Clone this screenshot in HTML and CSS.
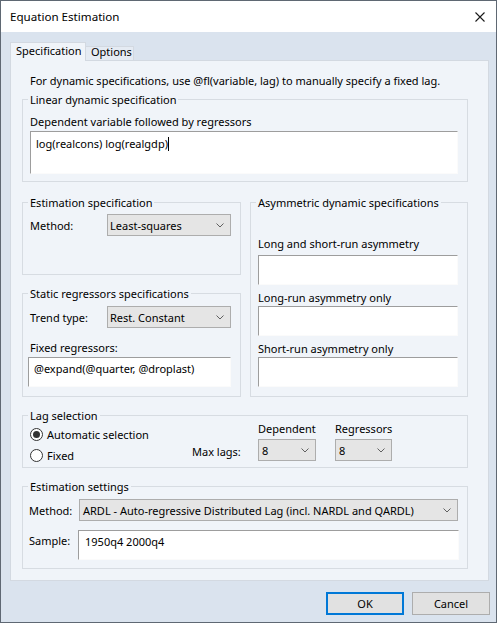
FILE: index.html
```html
<!DOCTYPE html>
<html>
<head>
<meta charset="utf-8">
<title>Equation Estimation</title>
<link rel="stylesheet" href="styles.css">
</head>
<body>
<div class="window">
  <div class="titlebar">
    <span class="title">Equation Estimation</span>
    <span class="close"><svg width="10" height="10" viewBox="0 0 10 10"><path d="M0.5 0.5L9.5 9.5M9.5 0.5L0.5 9.5" stroke="#1a1a1a" stroke-width="1.1" fill="none"/></svg></span>
  </div>
  <div class="client">
    <div class="tabs">
      <div class="tab active">Specification</div>
      <div class="tab inactive">Options</div>
    </div>
    <div class="panel">
      <div class="intro">For dynamic specifications, use @fl(variable, lag) to manually specify a fixed lag.</div>

      <div class="group g-linear">
        <div class="legend">Linear dynamic specification</div>
        <div class="l-dep">Dependent variable followed by regressors</div>
        <div class="edit area">log(realcons) log(realgdp)<span class="caret"></span></div>
      </div>

      <div class="cols">
        <div class="col">
          <div class="group g-est">
            <div class="legend">Estimation specification</div>
            <div class="row r-est">
              <span class="lbl lbl-m">Method:</span>
              <div class="select s-est"><span>Least-squares</span><svg class="chev" width="8" height="5" viewBox="0 0 8 5"><path d="M0.5 0.5L4 4L7.5 0.5" stroke="#606060" fill="none"/></svg></div>
            </div>
          </div>
          <div class="group g-static">
            <div class="legend">Static regressors specifications</div>
            <div class="row r-trend">
              <span class="lbl lbl-m">Trend type:</span>
              <div class="select s-est"><span>Rest. Constant</span><svg class="chev" width="8" height="5" viewBox="0 0 8 5"><path d="M0.5 0.5L4 4L7.5 0.5" stroke="#606060" fill="none"/></svg></div>
            </div>
            <div class="l-fixed">Fixed regressors:</div>
            <div class="edit e-fixed">@expand(@quarter, @droplast)</div>
          </div>
        </div>
        <div class="col">
          <div class="group g-asym">
            <div class="legend">Asymmetric dynamic specifications</div>
            <div class="l-asym1">Long and short-run asymmetry</div>
            <div class="edit e-asym e-asym1"></div>
            <div class="l-asym">Long-run asymmetry only</div>
            <div class="edit e-asym"></div>
            <div class="l-asym">Short-run asymmetry only</div>
            <div class="edit e-asym"></div>
          </div>
        </div>
      </div>

      <div class="group g-lag">
        <div class="legend">Lag selection</div>
        <div class="lagrow">
          <div class="radios">
            <div class="radio-row"><span class="radio on"><span class="dot"></span></span>Automatic selection</div>
            <div class="radio-row"><span class="radio"></span>Fixed</div>
          </div>
          <div class="maxlags">Max lags:</div>
          <div class="lagcol lag-dep">
            <div>Dependent</div>
            <div class="select s-lag"><span>8</span><svg class="chev" width="8" height="5" viewBox="0 0 8 5"><path d="M0.5 0.5L4 4L7.5 0.5" stroke="#606060" fill="none"/></svg></div>
          </div>
          <div class="lagcol lag-reg">
            <div>Regressors</div>
            <div class="select s-lag"><span>8</span><svg class="chev" width="8" height="5" viewBox="0 0 8 5"><path d="M0.5 0.5L4 4L7.5 0.5" stroke="#606060" fill="none"/></svg></div>
          </div>
        </div>
      </div>

      <div class="group g-settings">
        <div class="legend">Estimation settings</div>
        <div class="row r-method">
          <span class="lbl lbl-s">Method:</span>
          <div class="select s-method"><span>ARDL - Auto-regressive Distributed Lag (incl. NARDL and QARDL)</span><svg class="chev" width="8" height="5" viewBox="0 0 8 5"><path d="M0.5 0.5L4 4L7.5 0.5" stroke="#606060" fill="none"/></svg></div>
        </div>
        <div class="row r-sample">
          <span class="lbl lbl-s lbl-sample">Sample:</span>
          <div class="edit e-sample">1950q4 2000q4</div>
        </div>
      </div>
    </div>
    <div class="buttons">
      <div class="btn default">OK</div>
      <div class="btn">Cancel</div>
    </div>
  </div>
</div>
</body>
</html>
```

FILE: styles.css
```css
html, body {
  margin: 0;
  padding: 0;
}
body {
  font-family: "Noto Sans", "Open Sans", sans-serif;
  font-size: 11px;
  line-height: 15px;
  color: #000;
  background: #ffffff;
}
.window {
  width: 497px;
  height: 623px;
  box-sizing: border-box;
  border: 1px solid #5f6873;
  display: flex;
  flex-direction: column;
  background: #dae3ee;
}
.titlebar {
  height: 31px;
  flex: none;
  background: #ffffff;
  display: flex;
  align-items: center;
  padding-left: 9px;
}
.title {
  font-size: 11.6px;
  color: #000;
}
.close {
  margin-left: auto;
  margin-right: 11px;
  width: 10px;
  height: 10px;
  display: flex;
}
.client {
  flex: 1;
  padding: 10px 0 0 9px;
}
.tabs {
  display: flex;
  align-items: flex-end;
  height: 18px;
}
.tab {
  box-sizing: border-box;
  border: 1px solid #d3d9e1;
  border-bottom: none;
  white-space: nowrap;
}
.tab.active {
  width: 76px;
  height: 19px;
  margin-bottom: -1px;
  padding-left: 5px;
  background: #f0f4f9;
  position: relative;
  z-index: 1;
}
.tab.inactive {
  width: 48px;
  height: 14px;
  line-height: 9px;
  padding-left: 5px;
  border-left: none;
  background: #e5ebf3;
}
.panel {
  width: 479px;
  height: 521px;
  box-sizing: border-box;
  border: 1px solid #d3d9e1;
  background: #f0f4f9;
  padding: 12px 0 0 11px;
}
.intro {
  padding-left: 8px;
  white-space: nowrap;
}
.group {
  box-sizing: border-box;
  border: 1px solid #d7dce2;
  padding: 0 7px;
}
.legend {
  width: max-content;
  height: 15px;
  margin: -8px 0 0 -2px;
  padding: 0 2px;
  background: #f0f4f9;
  white-space: nowrap;
}
.edit {
  box-sizing: border-box;
  background: #ffffff;
  border-top: 1px solid #9d9d9d;
  border-left: 1px solid #9d9d9d;
  border-right: 1px solid #fbfbfb;
  border-bottom: 1px solid #fbfbfb;
  padding: 3px 5px 0 5px;
  white-space: nowrap;
}
.select {
  box-sizing: border-box;
  height: 22px;
  border: 1px solid #adadad;
  background: #e5e5e5;
  display: flex;
  align-items: center;
  padding: 0 6px 0 2px;
  white-space: nowrap;
}
.chev {
  margin-left: auto;
  flex: none;
}
.row {
  display: flex;
  align-items: center;
}
.lbl {
  flex: none;
  white-space: nowrap;
}

/* linear */
.g-linear {
  width: 446px;
  height: 83px;
  margin-top: 11px;
}
.l-dep {
  margin-top: 7px;
}
.area {
  margin-top: 2px;
  width: 428px;
  height: 43px;
  padding-top: 4px;
}
.caret {
  display: inline-block;
  width: 1px;
  height: 14px;
  background: #000;
  vertical-align: -3px;
}

/* columns */
.cols {
  display: grid;
  grid-template-columns: 219px 218px;
  column-gap: 9px;
  width: 446px;
  height: 195px;
  margin-top: 20px;
}
.col {
  display: flex;
  flex-direction: column;
}
.g-est {
  height: 73px;
}
.r-est {
  margin-top: 4px;
}
.lbl-m {
  width: 77px;
}
.s-est {
  width: 124px;
}
.g-static {
  height: 104px;
  margin-top: 18px;
}
.r-trend {
  margin-top: 5px;
}
.l-fixed {
  margin-top: 12px;
}
.e-fixed {
  margin-top: 2px;
  margin-left: -2px;
  width: 203px;
  height: 30px;
}
.g-asym {
  height: 195px;
}
.l-asym1 {
  margin-top: 26px;
}
.e-asym {
  width: 200px;
  height: 30px;
  margin-top: 1px;
}
.e-asym1 {
  margin-top: 4px;
}
.l-asym {
  margin-top: 5px;
}

/* lag */
.g-lag {
  width: 446px;
  height: 53px;
  margin-top: 18px;
}
.lagrow {
  display: flex;
  align-items: flex-start;
}
.radios {
  width: 162px;
  flex: none;
  margin-top: 1px;
}
.radio-row {
  height: 21px;
  display: flex;
  align-items: center;
  white-space: nowrap;
}
.radio {
  box-sizing: border-box;
  width: 13px;
  height: 13px;
  border: 1px solid #333333;
  border-radius: 50%;
  background: #ffffff;
  margin-right: 4px;
  display: flex;
  align-items: center;
  justify-content: center;
  flex: none;
}
.dot {
  width: 7px;
  height: 7px;
  border-radius: 50%;
  background: #333333;
}
.maxlags {
  width: 66px;
  flex: none;
  margin-top: 21px;
  white-space: nowrap;
}
.lagcol {
  display: flex;
  flex-direction: column;
  margin-top: -2px;
  flex: none;
}
.lagcol .select {
  margin-top: 3px;
}
.lag-dep {
  width: 58px;
}
.lag-reg {
  width: 57px;
  margin-left: 19px;
}
.s-lag {
  width: 100%;
  padding-left: 3px;
}

/* settings */
.g-settings {
  width: 446px;
  height: 83px;
  margin-top: 18px;
}
.r-method {
  margin-top: 5px;
}
.lbl-s {
  width: 49px;
  margin-left: -1px;
}
.r-method .lbl-s {
  width: 50px;
}
.s-method {
  width: 379px;
  padding-left: 3px;
}
.r-sample {
  margin-top: 9px;
  align-items: flex-start;
}
.lbl-sample {
  margin-top: 3px;
}
.e-sample {
  width: 381px;
  height: 30px;
  padding-left: 6px;
}

/* buttons */
.buttons {
  display: flex;
  justify-content: flex-end;
  gap: 8px;
  margin-top: 11px;
  padding-right: 6px;
}
.btn {
  box-sizing: border-box;
  width: 78px;
  height: 23px;
  border: 1px solid #adadad;
  background: #e1e1e1;
  display: flex;
  align-items: center;
  justify-content: center;
}
.btn.default {
  border: 2px solid #0078d7;
}
```
